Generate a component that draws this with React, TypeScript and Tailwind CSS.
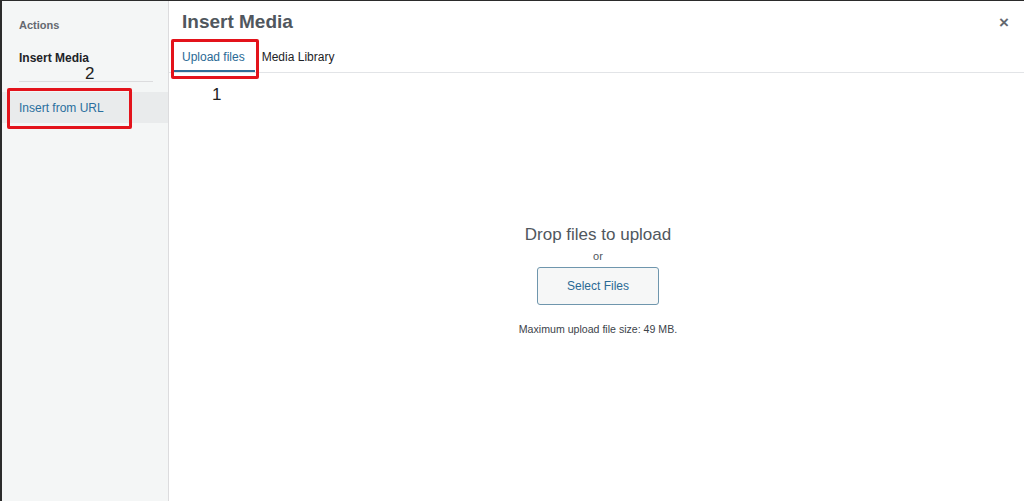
import React from "react";

const font = { fontFamily: '"Liberation Sans", Arial, sans-serif' };

export default function App() {
  return (
    <div
      className="relative flex h-[501px] w-full overflow-hidden border-t border-l-2 border-[#2b2b2b] bg-white text-[#1d2327]"
      style={font}
    >
      {/* ── SIDEBAR ── */}
      <aside className="flex w-[167px] shrink-0 flex-col border-r border-[#dcdcde] bg-[#f4f6f6]">
        <p className="pl-[17px] pt-[17px] text-[11px] font-bold leading-[14px] text-[#646970]">Actions</p>
        <p className="mt-[18px] pl-[17px] text-[12px] font-bold leading-[16px] text-[#1d2327]">Insert Media</p>
        <div className="ml-[17px] mr-[15px] mt-[15px] h-px bg-[#dcdcde]" />
        <a className="mt-[10px] flex h-[31px] items-center bg-[#e9ebec] pl-[17px] text-[12px] text-[#2a6f9e]">
          Insert from URL
        </a>
      </aside>

      {/* ── MAIN ── */}
      <main className="flex flex-1 flex-col">
        <header className="flex h-[40px] items-center justify-between pl-[13px] pr-[15px] pt-[3px]">
          <h1 className="text-[19px] font-bold text-[#50575e]">Insert Media</h1>
          <span className="text-[17px] font-bold leading-none text-[#646970]">×</span>
        </header>

        <nav className="flex h-[32px] items-stretch border-b border-[#e2e4e7] pl-[3px]">
          <button className="flex items-center border-b-2 border-[#2f6d97] px-[10px] pt-[3px] text-[12px] text-[#2a6a95]">
            Upload files
          </button>
          <button className="flex items-center px-[7px] pt-[1px] text-[12px] text-[#1d2327]">Media Library</button>
        </nav>

        <section className="flex flex-1 flex-col items-center pl-[3px] pt-[152px]">
          <p className="text-[17px] leading-[20px] text-[#50575e]">Drop files to upload</p>
          <p className="mt-[5px] text-[11px] leading-[13px] text-[#50575e]">or</p>
          <button className="mt-[4px] flex h-[38px] w-[122px] items-center justify-center rounded-[3px] border border-[#6f96ad] bg-[#f6f7f7] text-[12px] text-[#2a6a95]">
            Select Files
          </button>
          <p className="mt-[18px] text-[10.6px] leading-[13px] text-[#3c434a]">Maximum upload file size: 49 MB.</p>
        </section>
      </main>

      {/* ── ANNOTATIONS ── */}
      <div className="pointer-events-none absolute left-[169px] top-[38px] h-[40px] w-[88px] rounded-[2px] border-[3px] border-[#e3131b]" />
      <span className="pointer-events-none absolute left-[210px] top-[84px] text-[17px] leading-[20px] text-[#222]">1</span>
      <div className="pointer-events-none absolute left-[5px] top-[87px] h-[41px] w-[125px] rounded-[2px] border-[3px] border-[#e3131b]" />
      <span className="pointer-events-none absolute left-[83px] top-[63px] text-[17px] leading-[20px] text-[#222]">2</span>
    </div>
  );
}
